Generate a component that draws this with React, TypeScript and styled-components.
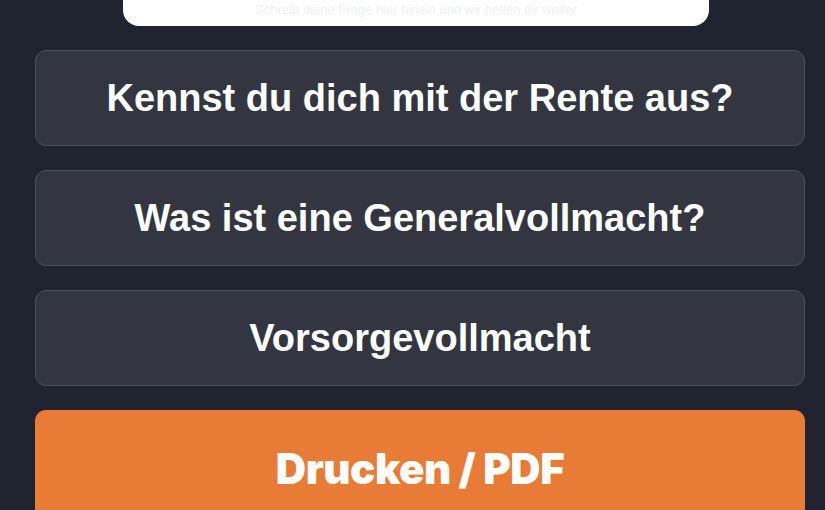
import React from 'react';
import styled, { createGlobalStyle } from 'styled-components';

const GlobalStyle = createGlobalStyle`
  html, body {
    margin: 0;
    padding: 0;
    background: #1f2430;
    overflow: hidden;
  }
`;

const Page = styled.div`
  width: 825px;
  height: 510px;
  overflow: hidden;
  background: #1f2430;
  box-sizing: border-box;
  padding: 0 20px 0 35px;
  display: flex;
  flex-direction: column;
  gap: 24px;
`;

const TopCard = styled.div`
  align-self: center;
  width: 586px;
  height: 80px;
  margin: -54px 0 0 -8px;
  flex-shrink: 0;
  background: #ffffff;
  border-radius: 16px;
  box-sizing: border-box;
  display: flex;
  align-items: flex-end;
  justify-content: center;
  padding-bottom: 9px;
  overflow: hidden;
`;

const FaintLine = styled.span`
  font-family: 'Liberation Sans', Arial, sans-serif;
  font-size: 13px;
  line-height: 14px;
  color: #eef0f2;
  white-space: nowrap;
`;

const QuestionButton = styled.button`
  flex-shrink: 0;
  height: 96px;
  width: 100%;
  box-sizing: border-box;
  background: #333640;
  border: 1.5px solid #4a4f5a;
  border-radius: 11px;
  color: #ffffff;
  font-family: 'Liberation Sans', Arial, sans-serif;
  font-weight: 700;
  font-size: 38px;
  display: flex;
  align-items: center;
  justify-content: center;
  padding: 0;
  cursor: pointer;
`;

const PrintButton = styled.button`
  flex-shrink: 0;
  height: 116px;
  width: 100%;
  box-sizing: border-box;
  background: #e87b35;
  border: none;
  border-radius: 11px;
  color: #ffffff;
  font-family: Inter, 'Open Sans', sans-serif;
  font-weight: 900;
  font-size: 42px;
  letter-spacing: -0.5px;
  display: flex;
  align-items: center;
  justify-content: center;
  padding: 0;
  cursor: pointer;
`;

const questions = [
  'Kennst du dich mit der Rente aus?',
  'Was ist eine Generalvollmacht?',
  'Vorsorgevollmacht',
];

const App: React.FC = () => {
  return (
    <>
      <GlobalStyle />
      <Page>
        <TopCard>
          <FaintLine>Schreib deine Frage hier hinein und wir helfen dir weiter</FaintLine>
        </TopCard>
        {questions.map((q) => (
          <QuestionButton key={q}>{q}</QuestionButton>
        ))}
        <PrintButton>Drucken / PDF</PrintButton>
      </Page>
    </>
  );
};

export default App;
